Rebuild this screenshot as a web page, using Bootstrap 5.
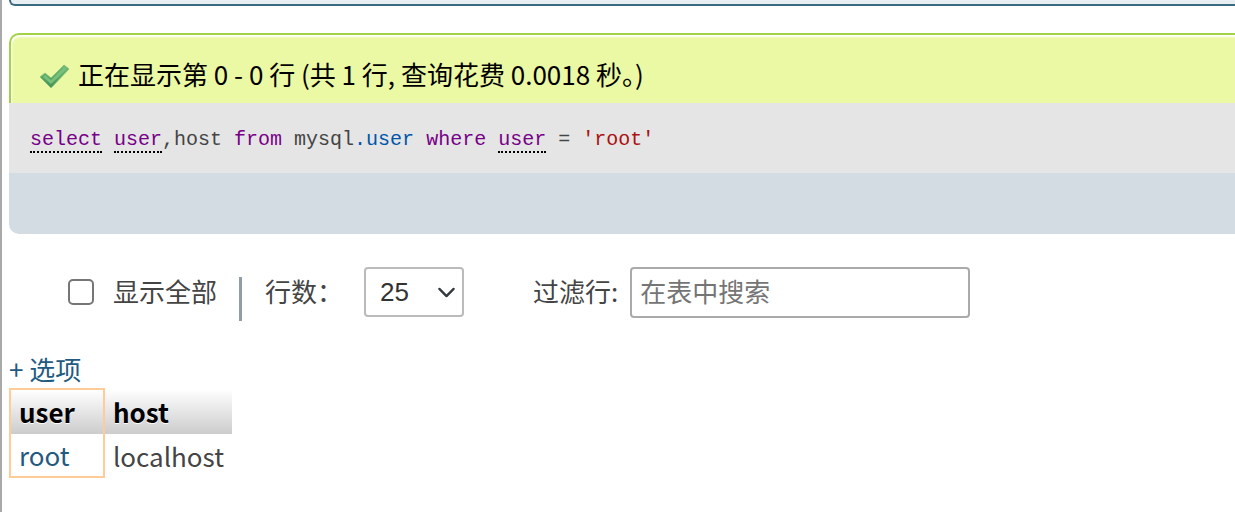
<!DOCTYPE html>
<html lang="zh-CN">
<head>
<meta charset="utf-8">
<meta name="viewport" content="width=device-width, initial-scale=1">
<title>phpMyAdmin</title>
<link href="https://cdn.jsdelivr.net/npm/bootstrap@5.3.0/dist/css/bootstrap.min.css" rel="stylesheet">
<style>
body { font-family: "Noto Sans CJK SC", sans-serif; font-size: 26px; line-height: 40px; color: #444; }
a { color: #235a81; }
.page-frame { border-left: 2px solid #a9a9a9; padding-left: 7px; }
.notice-end { height: 6px; background: #e8eef1; border: 2px solid #3a6a7e; border-width: 0 0 2px 2px; border-bottom-left-radius: 10px; }
.result-success { gap: 7px; margin-top: 27px; padding: 19px 28px 9px; color: #000; background: #ebf8a4; border: 2px solid #a2d246; border-width: 2px 0 0 2px; border-top-left-radius: 10px; box-shadow: inset 1px 2px 2px #fff; }
.result-success svg { margin-top: 4px; }
.sql-box { padding: 17px 21px 13px; background: #e5e5e5; }
.sql-box code { font: 20px/40px "Liberation Mono", monospace; color: #444; }
.sql-box .kw { color: #708; }
.sql-box a { color: #708; border-bottom: 2px dotted #000; }
.sql-box .col-ref { color: #05a; }
.sql-box .str { color: #a11; }
.tools { height: 61px; background: #d3dce3; border-bottom-left-radius: 10px; }
.nav-row { margin: 29px 0 0 59px; }
.nav-row label { padding-bottom: 3px; }
.show-all { margin-left: 19px; }
.nav-row .form-check-input { width: 26px; height: 26px; border: 2px solid #767676; border-radius: 5px; }
.divider { width: 3px; height: 44px; margin: 14px 23px 0 22px; background: #8fa0a5; }
.nav-row .form-select { width: 100px; height: 50px; margin-left: 21px; padding: 0 36px 0 14px; font: 26px/40px "Liberation Sans", sans-serif; color: #333; border: 2px solid #bbb; border-radius: 4px; background-position: right 6px center; background-size: 19px 19px; }
.nav-row .form-control { width: 340px; height: 51px; margin-left: 12px; padding: 0 8px 4px; font-size: 26px; line-height: 40px; color: #444; border: 2px solid #aaa; border-radius: 4px; }
.form-control::placeholder { color: #757575; }
.filter-group { margin-left: 69px; }
.options-link { margin-top: 29px; line-height: 38px; }
.results { border-collapse: collapse; line-height: 44px; font-size: 26px; }
.results th { height: 44px; color: #000; text-shadow: 0 1px 0 #fff; background: linear-gradient(#fff, #ccc); }
.results td { line-height: 42px; }
.results tr > * { padding: 0 8px; }
.results tr > :first-child { padding-right: 28px; }
.results .marked { border: 2px solid #fc9; }
</style>
</head>
<body>
<main class="page-frame min-vh-100">
  <div class="notice-end"></div>

  <section>
    <div class="result-success d-flex align-items-center" role="status">
      <svg width="32" height="26" viewBox="0 0 32 26" aria-hidden="true">
        <defs><linearGradient id="tick" x1="0" y1="0" x2="0" y2="1"><stop offset="0" stop-color="#6fb977"/><stop offset="1" stop-color="#439254"/></linearGradient></defs>
        <path d="M1 14 6 10 12 15 25 2 30 6 12 25Z" fill="url(#tick)" stroke="#8cc47c" stroke-linejoin="round"/>
        <path d="M4 14 6 12 12 17 25 4 28 6 12 21Z" fill="#76c07a"/>
      </svg>
      <span>正在显示第 0 - 0 行 (共 1 行, 查询花费 0.0018 秒。)</span>
    </div>
    <div class="sql-box"><code class="d-block text-nowrap"><a class="text-decoration-none" href="#select">select</a> <a class="text-decoration-none" href="#user">user</a>,host <span class="kw">from</span> mysql<span class="col-ref">.user</span> <span class="kw">where</span> <a class="text-decoration-none" href="#user">user</a> = <span class="str">'root'</span></code></div>
    <div class="tools"></div>
  </section>

  <form class="nav-row d-flex align-items-center">
    <input class="form-check-input m-0 flex-shrink-0" type="checkbox" id="showAll">
    <label class="show-all text-nowrap" for="showAll">显示全部</label>
    <span class="divider flex-shrink-0"></span>
    <label class="text-nowrap" for="rowCount">行数：</label>
    <select class="form-select flex-shrink-0" id="rowCount"><option>25</option><option>50</option><option>100</option></select>
    <div class="filter-group d-flex align-items-center">
      <label class="text-nowrap" for="filterRows">过滤行:</label>
      <input class="form-control" type="text" id="filterRows" placeholder="在表中搜索">
    </div>
  </form>

  <div class="options-link"><a class="text-decoration-none" href="#options">+ 选项</a></div>
  <table class="results">
    <colgroup class="marked"><col></colgroup>
    <colgroup><col></colgroup>
    <thead><tr><th scope="col">user</th><th scope="col">host</th></tr></thead>
    <tbody><tr><td><a class="text-decoration-none" href="#root">root</a></td><td>localhost</td></tr></tbody>
  </table>
</main>
<script src="https://cdn.jsdelivr.net/npm/bootstrap@5.3.0/dist/js/bootstrap.bundle.min.js"></script>
</body>
</html>
